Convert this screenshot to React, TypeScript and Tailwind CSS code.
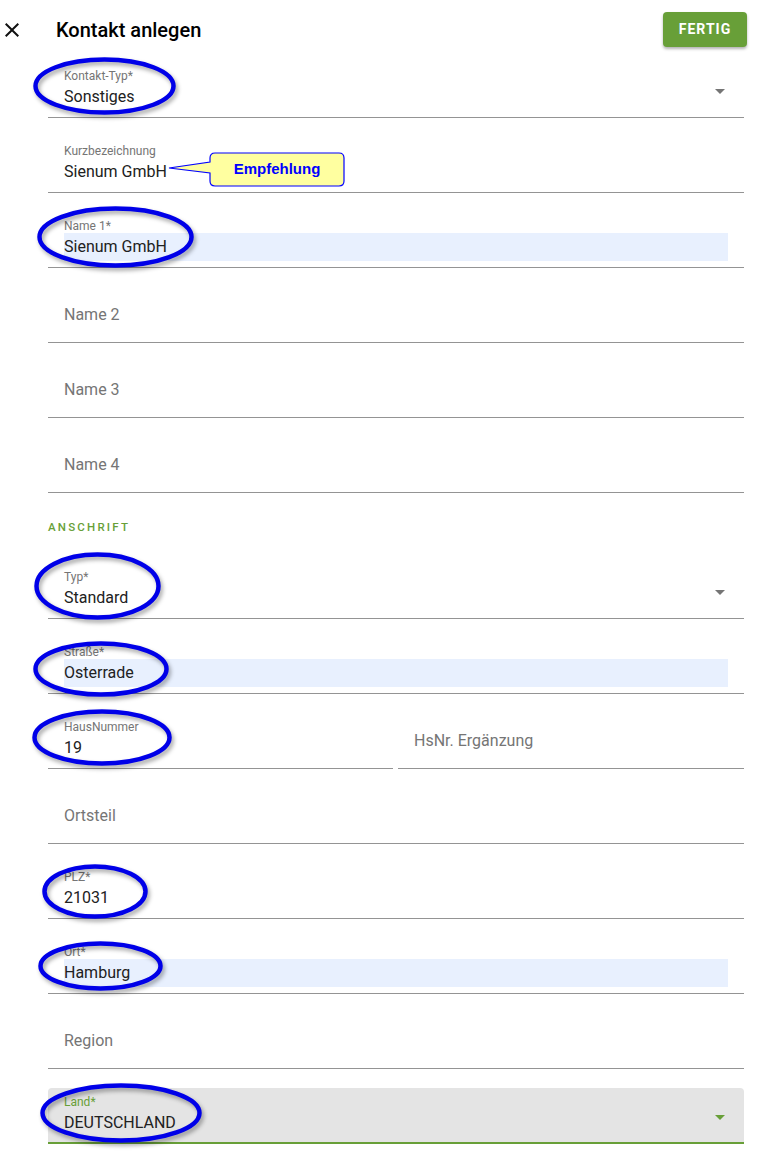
import React from "react";

type Ell = { l: number; t: number; w: number; h: number };

function Ellipse({ e }: { e: Ell }) {
  return (
    <svg
      className="pointer-events-none absolute overflow-visible drop-shadow-[2px_3px_2px_rgba(0,0,0,0.35)]"
      style={{ left: e.l, top: e.t, width: e.w, height: e.h }}
      width={e.w}
      height={e.h}
    >
      <ellipse
        cx={e.w / 2}
        cy={e.h / 2}
        rx={e.w / 2 - 2.5}
        ry={e.h / 2 - 2.5}
        fill="none"
        stroke="#0000e8"
        strokeWidth={4.5}
      />
    </svg>
  );
}

function Arrow({ green }: { green?: boolean }) {
  return (
    <svg className="absolute right-[19px] top-[27px]" width="10" height="5" viewBox="0 0 10 5">
      <path d="M0 0 L10 0 L5 5 Z" fill={green ? "#689f38" : "#757575"} />
    </svg>
  );
}

function Field({
  label,
  value,
  autofill,
  select,
  ellipse,
  className = "",
  children,
}: {
  label: string;
  value?: string;
  autofill?: boolean;
  select?: boolean;
  ellipse?: Ell;
  className?: string;
  children?: React.ReactNode;
}) {
  return (
    <div className={"relative h-14 border-b border-[#949494] " + className}>
      {value !== undefined ? (
        <div className="flex flex-col pl-4 pr-4 pt-[7px]">
          <div className="h-[14px] text-[12px] leading-[14px] text-[#757575]">{label}</div>
          <div
            className={
              "flex h-[28px] items-center pb-[2px] text-[16px] leading-[19px] text-[#212121] " +
              (autofill ? "bg-[#e8f0fe]" : "")
            }
          >
            {value}
          </div>
        </div>
      ) : (
        <div className="flex h-full items-center pl-4 text-[16px] text-[#757575]">{label}</div>
      )}
      {select && <Arrow />}
      {children}
      {ellipse && <Ellipse e={ellipse} />}
    </div>
  );
}

export default function App() {
  return (
    <div className="min-h-[1161px] w-full bg-white font-['Roboto',sans-serif]">
      <header className="flex h-[62px] items-start justify-between">
        <div className="flex h-[60px] items-center">
          <svg width="24" height="24" viewBox="0 0 24 24" className="shrink-0">
            <path
              d="M19 6.41L17.59 5 12 10.59 6.41 5 5 6.41 10.59 12 5 17.59 6.41 19 12 13.41 17.59 19 19 17.59 13.41 12z"
              fill="#111"
            />
          </svg>
          <h1 className="ml-8 text-[20px] font-medium text-black">Kontakt anlegen</h1>
        </div>
        <button className="mr-3 mt-3 flex h-[35px] w-[84px] items-center justify-center rounded-[4px] bg-[#689f38] text-[14px] font-bold tracking-[1px] text-white shadow-[0_2px_3px_rgba(0,0,0,0.3)]">
          FERTIG
        </button>
      </header>

      <main className="flex flex-col pl-12 pr-[15px]">
        <Field label="Kontakt-Typ*" value="Sonstiges" select ellipse={{ l: -15, t: -5, w: 143, h: 58 }} />
        <Field label="Kurzbezeichnung" value="Sienum GmbH" className="mt-[19px]">
          <svg className="absolute left-[119px] top-[15px] overflow-visible" width="180" height="36">
            <path
              d="M48,1 H172 Q177,1 177,6 V29 Q177,34 172,34 H48 Q43,34 43,29 V21 L2,16 L43,10 V6 Q43,1 48,1 Z"
              fill="#ffffa0"
              stroke="#0000ff"
              strokeWidth="1.2"
            />
          </svg>
          <div className="absolute left-[162px] top-[16px] flex h-[33px] w-[134px] items-center justify-center font-['Liberation_Sans',Arial,sans-serif] text-[15px] font-bold text-[#0000ff]">
            Empfehlung
          </div>
        </Field>
        <Field label="Name 1*" value="Sienum GmbH" autofill className="mt-[19px]" ellipse={{ l: -11, t: -6, w: 157, h: 62 }} />
        <Field label="Name 2" className="mt-[19px]" />
        <Field label="Name 3" className="mt-[19px]" />
        <Field label="Name 4" className="mt-[19px]" />

        <div className="flex h-[70px] items-center text-[11.5px] font-medium tracking-[2.2px] text-[#689f38]">
          ANSCHRIFT
        </div>

        <Field label="Typ*" value="Standard" select ellipse={{ l: -14, t: -11, w: 127, h: 68 }} />
        <Field label="Straße*" value="Osterrade" autofill className="mt-[19px]" ellipse={{ l: -15, t: 3, w: 136, h: 56 }} />
        <div className="mt-[19px] flex gap-[5px]">
          <Field label="HausNummer" value="19" className="w-[345px]" ellipse={{ l: -16, t: -4, w: 140, h: 57 }} />
          <Field label="HsNr. Ergänzung" className="flex-1" />
        </div>
        <Field label="Ortsteil" className="mt-[19px]" />
        <Field label="PLZ*" value="21031" className="mt-[19px]" ellipse={{ l: -6, t: 1, w: 106, h: 55 }} />
        <Field label="Ort*" value="Hamburg" autofill className="mt-[19px]" ellipse={{ l: -10, t: 3, w: 125, h: 50 }} />
        <Field label="Region" className="mt-[19px]" />

        <div className="relative mt-[19px] h-14 rounded-t-[4px] border-b-2 border-[#689f38] bg-[#e4e4e4]">
          <div className="flex flex-col pl-4 pr-4 pt-[7px]">
            <div className="h-[14px] text-[12px] leading-[14px] text-[#689f38]">Land*</div>
            <div className="flex h-[28px] items-center pb-[2px] text-[16px] leading-[19px] text-[#212121]">DEUTSCHLAND</div>
          </div>
          <Arrow green />
          <Ellipse e={{ l: -8, t: -5, w: 162, h: 60 }} />
        </div>
      </main>
    </div>
  );
}
